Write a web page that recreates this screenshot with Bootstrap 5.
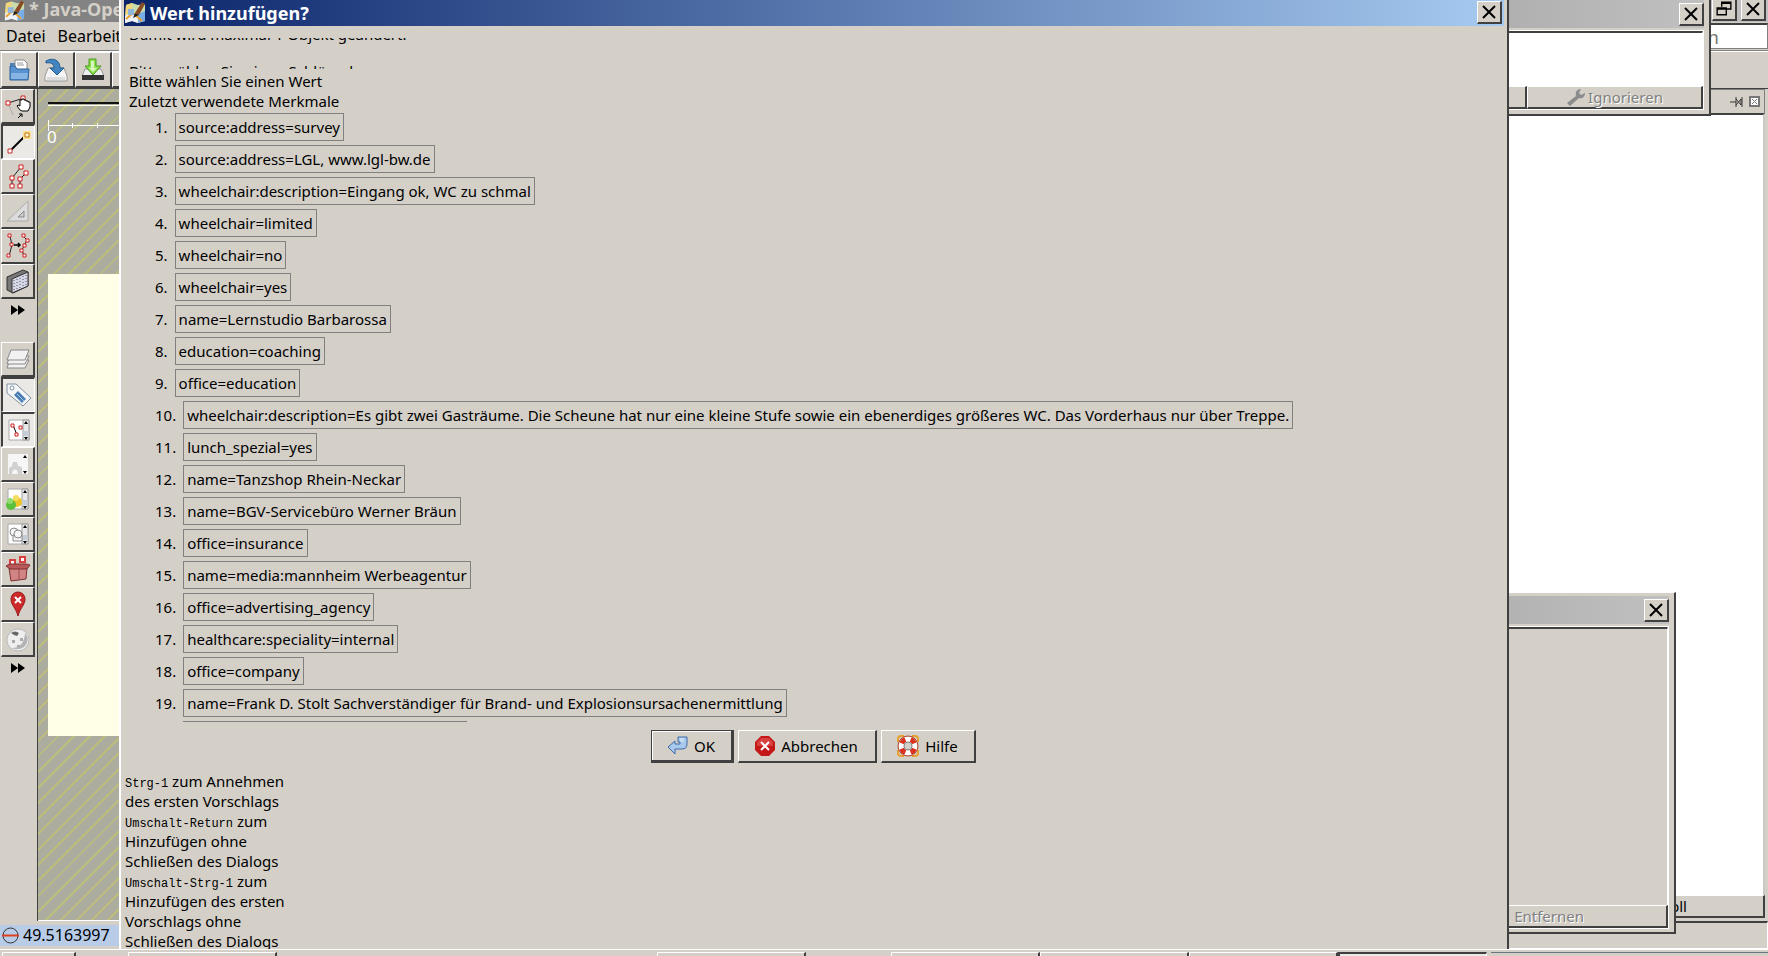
<!DOCTYPE html>
<html lang="de">
<head>
<meta charset="utf-8">
<meta name="viewport" content="width=device-width, initial-scale=1">
<title>Wert hinzufügen?</title>
<link href="https://cdn.jsdelivr.net/npm/bootstrap@5.3.0/dist/css/bootstrap.min.css" rel="stylesheet">
<style>
:root { --face:#d4d0c8; --dark:#404040; --shade:#808080; }
body { font-family:"Noto Sans","Liberation Sans",sans-serif; font-size:15px; line-height:20px; color:#000; background:var(--face); }
.face { background:var(--face); }
.raised { background:var(--face); border:solid; border-width:1px 2px 2px 1px; border-color:#fff var(--dark) var(--dark) #fff; border-radius:0; color:#000; padding:0; }
.pressed { background:#ebe9e5; border-width:2px 1px 1px 2px; border-color:var(--dark) #fff #fff var(--dark); }
.caption-bar { font-family:"Noto Sans","DejaVu Sans",sans-serif; font-weight:700; font-size:18px; white-space:nowrap; }
.cap-btn { width:25px; height:23px; display:flex; align-items:center; justify-content:center; flex:none; }

/* main window */
.app-caption { height:22px; background:linear-gradient(90deg,#808080,#c0c0c0); color:#d4d0c8; padding-bottom:4px; padding-right:2px; }
.app-menu { height:29px; border-bottom:1px solid var(--shade); padding-left:6px; gap:12px; }
.app-menu a { color:#000; text-decoration:none; font-size:16px; }
.search-box { width:260px; height:26px; border:1px solid var(--shade); border-top:2px solid var(--dark); border-radius:0; padding:0 48px 0 2px; font-size:18px; color:#808080; text-align:right; }
.app-tools { height:38px; border-top:1px solid #fff; border-bottom:1px solid var(--dark); padding-left:1px; }
.app-tools .raised { width:37px; height:36px; }
.side-tools { width:38px; padding:0 1px; border-right:1px solid var(--dark); }
.side-tools .raised { width:34px; height:35px; }
.more-btn { width:34px; height:22px; border:0; background:none; padding:0; }
.side-gap { height:21px; }
.map-view { background:repeating-linear-gradient(135deg,#adad9f 0 9px,#bcbc7c 9px 11px); border-bottom:1px solid #fff; }
.map-rule { margin:13px 0 0 10px; border-top:2px solid #111; border-bottom:1px solid #fff; height:4px; }
.map-scale { margin:14px 0 0 10px; height:11px; background:
  linear-gradient(#fff,#fff) 0 5px/100% 1px no-repeat,
  linear-gradient(#fff,#fff) 0 0/1px 11px no-repeat,
  repeating-linear-gradient(90deg,transparent 0 24px,#fff 24px 25px) 0 3px/100% 5px no-repeat; }
.map-zero { margin-left:9px; color:#fff; font-size:17px; line-height:12px; }
.map-area { margin:131px 0 184px 10px; background:#ffffe8; }
.dock { width:330px; padding:0 3px 3px 0; }
.dock-head { height:24px; border-top:1px solid var(--shade); border-right:1px solid var(--shade); }
.dock-list { border-top:2px solid var(--dark); border-right:2px solid #c8c8c4; background:#fff; }
.dock-btn { padding-right:76px; }
.app-status { height:28px; }
.coord { width:160px; height:21px; background:#b8cce8; font-size:16px; padding-left:2px; }
.status-rest { border:1px solid #fff; border-top:2px solid var(--dark); }
.taskbar { height:7px; border-top:1px solid #fff; padding-top:2px; }
.task { flex:none; width:149px; height:12px; }

/* windows above it */
.win { position:absolute; background:var(--face); }
.win-alert { top:0; right:57px; width:300px; height:116px; border-right:2px solid var(--dark); border-bottom:2px solid var(--dark); padding:0 5px 4px 0; }
.win-props { bottom:22px; right:92px; width:300px; height:342px; border:solid; border-width:1px 2px 2px 0; border-color:#fff var(--dark) var(--dark); padding:3px 5px 3px 0; }
.grey-caption { height:28px; background:linear-gradient(90deg,#a8a8a8,#c0c0c0); }
.inner { margin-top:2px; border:1px solid #fff; }
.inner-field { border-top:2px solid var(--dark); border-right:1px solid #fff; }
.ghost { color:#808080; text-shadow:1px 1px 0 #fff; }
.remove-btn { padding-right:82px; height:23px; }
.ignore-btn { width:176px; gap:2px; }
.dialog-win { top:0; bottom:7px; left:119px; right:259px; border-left:2px solid #fff; border-right:2px solid var(--dark); padding:0 3px; overflow:hidden; }
.blue-caption { height:27px; background:linear-gradient(90deg,#0a246a,#a6caf0); color:#fff; padding-right:2px; }
.intro { height:33px; margin-top:12px; padding-left:5px; overflow:hidden; display:flex; flex-direction:column; justify-content:flex-end; }
.intro p { flex:none; }
.intro-gap { height:17px; }
.intro-end { margin-bottom:-12px; }
.choices { padding:2px 0 0 5px; min-height:0; overflow:hidden; }
.tags { padding-left:26px; padding-top:2px; }
.tags li { display:flex; align-items:center; gap:7px; height:28px; margin-bottom:4px; }
.tag-box { border:1px solid var(--shade); padding:3px; height:28px; white-space:nowrap; }
.dlg-btn { height:33px; display:flex; align-items:center; justify-content:center; gap:6px; }
.dlg-btn.is-default { border:1px solid var(--dark); border-width:1px 3px 3px 1px; box-shadow:inset 1px 1px 0 #fff; }
.dlg-row { padding-right:2px; }
.w-ok { width:83px; } .w-cancel { width:139px; } .w-help { width:95px; }
.hints { flex:none; width:164px; height:178px; padding-left:1px; margin-top:8px; overflow:hidden; }
.hints kbd { font:12px/12px "Liberation Mono",monospace; color:#000; background:none; padding:0; }
svg { flex:none; display:block; margin:auto; }
.caption-bar svg, .dlg-btn svg, .coord svg, .ghost svg { margin-left:0; margin-right:0; }
</style>
</head>
<body class="overflow-hidden">
<svg width="0" height="0" class="position-absolute" aria-hidden="true">
  <symbol id="i-x" viewBox="0 0 14 14"><path d="M1 1 13 13M13 1 1 13" stroke="#000" stroke-width="2"/></symbol>
  <symbol id="i-app" viewBox="0 0 22 22"><path d="M2 3 8 1l6 2 7-1v17l-7 2-6-2-7 2z" fill="#c9dcae"/><path d="M2 3 8 1v9l-7 4z" fill="#f0d67a"/><path d="M14 12l7-3v10l-7 2z" fill="#78aee8"/><path d="M1 14l7-4 6 5v6l-6-2-7 2z" fill="#eef2f6"/><path d="M2 17 9 11l9 8" stroke="#e8a030" stroke-width="2" fill="none"/><path d="M4 7h6v6H4z" fill="#8fb5dd"/><path d="M18 0 21 2 15 13l-4-2z" fill="#8a4a24"/><path d="M15 13l-6 3 2-5z" fill="#222"/></symbol>
  <symbol id="i-more" viewBox="0 0 16 10"><path d="M1 0 8 5 1 10zM8 0l7 5-7 5z" fill="#000"/></symbol>
  <symbol id="i-page" viewBox="0 0 24 24"><path d="M2 2h20v20H2z" fill="#fff" stroke="#aaa" stroke-width="1"/><path d="M16 2h6v20h-6z" fill="#e8e8e8" stroke="#999" stroke-width="1"/><path d="M16 13h6v5h-6z" fill="#c4ccd6"/><path d="M17 6l2-3 2 3zM17 19l2 3 2-3z" fill="#000"/></symbol>
</svg>

<div class="vh-100 d-flex flex-column position-relative face">
  <div class="flex-grow-1 d-flex flex-column" style="min-height:0">
    <header class="app-caption caption-bar d-flex align-items-center ps-1 gap-1">
      <svg width="21" height="22"><use href="#i-app"/></svg>
      <span class="me-auto">* Java-OpenStreetMap-Editor</span>
      <button class="raised cap-btn" aria-label="Wiederherstellen"><svg width="16" height="16" viewBox="0 0 14 14"><path d="M5 5V1h8v6H9M5 2h8M1 6h8v6H1zM1 7h8" fill="none" stroke="#000" stroke-width="1.2"/></svg></button>
      <button class="raised cap-btn" aria-label="Schließen"><svg width="14" height="14"><use href="#i-x"/></svg></button>
    </header>
    <nav class="app-menu d-flex align-items-center">
      <a href="#">Datei</a><a href="#">Bearbeiten</a>
      <input class="search-box ms-auto" aria-label="Suchen" placeholder="Menüeintrag suchen" value="">
    </nav>
    <div class="app-tools d-flex">
      <button class="raised" aria-label="Öffnen"><svg width="24" height="24" viewBox="0 0 24 24"><path d="M3 8V5h6l1 2" fill="#4d82bd"/><path d="M8 2h9l3 3v9H8z" fill="#fff" stroke="#888"/><path d="M10 5h6M10 7h7" stroke="#999"/><path d="M3 8h5l2 3h12l-1 11H3z" fill="#5a94d0" stroke="#2d619c"/><path d="M4 15h17l-1 6H4z" fill="#86b4e4"/></svg></button>
      <button class="raised" aria-label="Speichern"><svg width="24" height="24" viewBox="0 0 24 24"><path d="M4 10h16l3 8v5H1v-5z" fill="#f4f4f4" stroke="#999"/><path d="M3 19h18v3H3z" fill="#ddd"/><path d="M2 3c7-4 14-1 14 7h4l-7 7-7-7h4c0-4-3-6-8-5z" fill="#4385c0" stroke="#215d94"/></svg></button>
      <button class="raised" aria-label="Herunterladen"><svg width="24" height="24" viewBox="0 0 24 24"><path d="M4 11h16l3 7H1z" fill="#eee" stroke="#999"/><path d="M1 17h22v5H1z" fill="#333"/><path d="M8 1h7v7h5l-8 9-8-9h4z" fill="#8be04e" stroke="#4a9a1e"/><path d="M10 3h3v7h3l-4 4-4-4h2z" fill="#d8f8c0"/></svg></button>
      <button class="raised" aria-label="Hochladen"></button>
    </div>
    <div class="flex-grow-1 d-flex" style="min-height:0">
      <aside class="side-tools d-flex flex-column">
        <button class="raised" aria-label="Auswählen"><svg width="26" height="26" viewBox="0 0 26 26"><path d="M3 10 19 5" stroke="#222" fill="none"/><path d="M4 12 8 22" stroke="#aaa" fill="none"/><path d="M1 8h4v4H1zM16 3h4v4h-4z" fill="#fff" stroke="#d02020"/><path d="M15 17l-3-4 1-1 2 1V7h2V6h2v1h2v1h2v1h2v5l-2 4h-6z" fill="#fff" stroke="#000"/><path d="M13 25l4-4m0 3v-3h-3" stroke="#000" fill="none"/></svg></button>
        <button class="raised pressed" aria-label="Zeichnen"><svg width="26" height="26" viewBox="0 0 26 26"><path d="M4 22 21 5" stroke="#000" stroke-width="2"/><path d="M17 2h8v8h-8z" fill="#fbe08a"/><path d="M19 4h4v4h-4z" fill="#fff8c8" stroke="#c07020"/><path d="M2 20h4v4H2z" fill="#fff" stroke="#c03030"/></svg></button>
        <button class="raised" aria-label="Parallele Linien"><svg width="26" height="26" viewBox="0 0 26 26"><path d="M7 23v-8L16 4M15 23v-7l6-6" stroke="#222" fill="none"/><path d="M5 21h4v4H5zM5 13h4v4H5zM14 2h4v4h-4zM13 21h4v4h-4zM13 14h4v4h-4zM19 8h4v4h-4z" fill="#fff" stroke="#d02020"/></svg></button>
        <button class="raised" aria-label="Winkel"><svg width="26" height="26" viewBox="0 0 26 26"><path d="M2 23 23 3v20z" fill="#dcdcdc" stroke="#aaa"/><path d="M13 19l6-6v6z" fill="#ccc" stroke="#888"/></svg></button>
        <button class="raised" aria-label="Verbessern"><svg width="26" height="26" viewBox="0 0 26 26"><path d="M5 3 7 12 4 23M18 3l4 4-3 6-2 4 2 6" stroke="#222" fill="none"/><path d="M9 12h6m-2-2 2 2-2 2" stroke="#000" fill="none" stroke-width="1.5"/><path d="M3 1h3v3H3zM5 10h3v3H5zM2 21h3v3H2zM17 1h3v3h-3zM21 6h3v3h-3zM18 11h3v3h-3zM15 16h3v3h-3zM18 21h3v3h-3z" fill="#fff" stroke="#d02020"/></svg></button>
        <button class="raised" aria-label="Extrudieren"><svg width="26" height="26" viewBox="0 0 26 26"><path d="M2 9 18 2l5 2v14L8 25l-6-3z" fill="#777" stroke="#333"/><path d="M7 11 23 4v14L7 25z" fill="#d6d8ea" stroke="#333"/><path d="M9 12v11M12 11v11M15 10v10M18 8v11M21 7v10" stroke="#555" stroke-dasharray="1 2"/></svg></button>
        <button class="more-btn" aria-label="Mehr"><svg width="16" height="10"><use href="#i-more"/></svg></button>
        <div class="side-gap"></div>
        <button class="raised" aria-label="Ebenen"><svg width="26" height="26" viewBox="0 0 26 26"><g fill="#f2f2f2" stroke="#888"><path d="M2 22 5 14h19l-4 8z"/><path d="M2 18 5 10h19l-4 8z"/><path d="M2 14 6 4h18l-4 10z"/></g></svg></button>
        <button class="raised pressed" aria-label="Merkmale"><svg width="26" height="26" viewBox="0 0 26 26"><path d="M1 2h9l15 14-8 8L1 11z" fill="#f4f6f8" stroke="#8090a0"/><circle cx="6" cy="6" r="2" fill="#fff" stroke="#8090a0"/><path d="M8 13l4-4 8 8-4 4z" fill="#4a7fb4"/><path d="M11 12l7 7" stroke="#a8c8e8"/></svg></button>
        <button class="raised pressed" aria-label="Auswahl"><svg width="24" height="24" viewBox="0 0 24 24"><use href="#i-page"/><path d="M6 7 10 17" stroke="#000"/><path d="M4 6h3v3H4zM12 8h3v3h-3zM8 15h3v3H8z" fill="#fff" stroke="#d02020"/></svg></button>
        <button class="raised" aria-label="Relationen"><svg width="24" height="24" viewBox="0 0 24 24"><path d="M2 2h20v20H2z" fill="#f6f6f6"/><path d="M3 22v-6l3-2 1-4h4l1 4 4 1v7h-4c0-6-6-6-6 0z" fill="#d0d0d0"/><path d="M17 6l2-3 2 3zM17 19l2 3 2-3z"/></svg></button>
        <button class="raised" aria-label="Autoren"><svg width="24" height="24" viewBox="0 0 24 24"><use href="#i-page"/><circle cx="11" cy="15" r="5" fill="#ecc428"/><circle cx="10" cy="11" r="3" fill="#f4dc60"/><circle cx="5" cy="18" r="5" fill="#5abf3a"/><circle cx="4" cy="14" r="3" fill="#8fdc70"/></svg></button>
        <button class="raised" aria-label="Filter"><svg width="24" height="24" viewBox="0 0 24 24"><use href="#i-page"/><g fill="#f6f6f6" stroke="#888"><circle cx="8" cy="10" r="4"/><path d="M7 13h9v6H7z"/><circle cx="12" cy="12" r="4"/></g></svg></button>
        <button class="raised" aria-label="Änderungssätze"><svg width="26" height="26" viewBox="0 0 26 26"><path d="M4 12l18-1-1 12-15 2z" fill="#d08484" stroke="#803030"/><path d="M14 13v11" stroke="#a05050"/><path d="M5 4h5v5H5zM15 1h5v5h-5z" fill="#fff" stroke="#d84040" stroke-width="2"/><path d="M1 10l4-2h16l4 1-3 4H5z" fill="#b85858" stroke="#803030"/></svg></button>
        <button class="raised" aria-label="Fehler"><svg width="26" height="26" viewBox="0 0 26 26"><path d="M13 25C11 17 6 14 6 8a7 7 0 0 1 14 0c0 6-5 9-7 17z" fill="#cc2a2a" stroke="#991818"/><path d="M10 6l6 6m0-6-6 6" stroke="#fff" stroke-width="2"/></svg></button>
        <button class="raised" aria-label="Wikipedia"><svg width="26" height="26" viewBox="0 0 26 26"><circle cx="13" cy="14" r="11" fill="#eee" stroke="#bbb"/><path d="M20 7q6 7-1 14-6 4-12 1 12 0 13-15z" fill="#b4b4b4"/><path d="M6 7q4-3 8 0l-2 3-3-1z" fill="#666"/><path d="M7 14h3v3H7zM15 12h3v3h-3zM12 19h3v2h-3z" fill="#aaa"/></svg></button>
        <button class="more-btn" aria-label="Mehr"><svg width="16" height="10"><use href="#i-more"/></svg></button>
      </aside>
      <main class="map-view flex-grow-1 d-flex flex-column">
        <div class="map-rule"></div><div class="map-scale"></div><div class="map-zero">0</div>
        <div class="map-area flex-grow-1"></div>
      </main>
      <section class="dock face d-flex flex-column">
        <div class="dock-head d-flex align-items-center justify-content-end gap-1 pe-1">
          <svg class="mx-0" width="15" height="12" viewBox="0 0 15 12"><path d="M0 6h6M6 1v10M6 3l5 6V3L6 9M12 1v10" stroke="#333" fill="none" stroke-width="1"/></svg>
          <svg class="mx-0" width="11" height="11" viewBox="0 0 11 11"><path d="M1 1h9v9H1z" fill="#fff" stroke="#777" stroke-width="2"/><path d="M3 3l5 5m0-5L3 8" stroke="#777" stroke-width="1"/></svg>
        </div>
        <div class="dock-list flex-grow-1"></div>
        <button class="raised dock-btn text-end">Protokoll</button>
      </section>
    </div>
    <footer class="app-status d-flex align-items-center">
      <div class="coord d-flex align-items-center gap-1"><svg width="17" height="17" viewBox="0 0 17 17"><circle cx="8.500" cy="8.500" r="7.500" fill="none" stroke="#333"/><path d="M0 8.500h17" stroke="#e04020" stroke-width="2"/></svg><span>49.5163997</span></div>
      <div class="status-rest flex-grow-1 align-self-stretch"></div>
    </footer>
  </div>
  <div class="taskbar d-flex overflow-hidden">
    <div class="raised task" style="width:74px;margin-left:2px"></div>
    <div class="raised task" style="margin-left:52px"></div>
    <div class="raised task" style="margin-left:380px"></div>
    <div class="raised task" style="margin-left:85px"></div>
    <div class="raised task"></div>
    <div class="raised task"></div>
    <div class="raised pressed task"></div>
    <div class="task flex-grow-1 border-top border-secondary ms-1"></div>
  </div>

  <section class="win win-alert d-flex flex-column">
    <div class="grey-caption d-flex align-items-center justify-content-end"><button class="raised cap-btn" aria-label="Schließen"><svg width="14" height="14"><use href="#i-x"/></svg></button></div>
    <div class="inner flex-grow-1 d-flex flex-column">
      <div class="inner-field bg-white flex-grow-1"></div>
      <div class="d-flex">
        <button class="raised ghost flex-grow-1" disabled></button>
        <button class="raised ghost ignore-btn d-flex align-items-center justify-content-center" disabled><svg width="20" height="18" viewBox="0 0 20 18"><path d="M1 15 10 8c-1-4 1-7 5-7l-2 4 2 2 4-2c0 4-3 6-6 5L4 18z" fill="#8c8c8c"/></svg>Ignorieren</button>
      </div>
    </div>
  </section>

  <section class="win win-props d-flex flex-column">
    <div class="grey-caption d-flex align-items-center justify-content-end"><button class="raised cap-btn" aria-label="Schließen"><svg width="14" height="14"><use href="#i-x"/></svg></button></div>
    <div class="inner flex-grow-1 d-flex flex-column">
      <div class="inner-field flex-grow-1"></div>
      <button class="raised ghost remove-btn text-end" disabled>Entfernen</button>
    </div>
  </section>

  <section class="win dialog-win d-flex flex-column" role="dialog" aria-labelledby="dlg">
    <div class="blue-caption caption-bar d-flex align-items-center gap-1">
      <svg width="22" height="22"><use href="#i-app"/></svg><span id="dlg" class="me-auto">Wert hinzufügen?</span>
      <button class="raised cap-btn" aria-label="Schließen"><svg width="14" height="14"><use href="#i-x"/></svg></button>
    </div>
    <div class="intro">
      <p class="mb-0">Damit wird maximal 1 Objekt geändert.</p>
      <p class="intro-gap mb-0"></p>
      <p class="intro-end">Bitte wählen Sie einen Schlüssel</p>
    </div>
    <div class="choices flex-grow-1">
      <div>Bitte wählen Sie einen Wert</div>
      <div>Zuletzt verwendete Merkmale</div>
      <ol class="tags list-unstyled mb-0">
        <li>1. <span class="tag-box">source:address=survey</span></li>
        <li>2. <span class="tag-box">source:address=LGL, www.lgl-bw.de</span></li>
        <li>3. <span class="tag-box">wheelchair:description=Eingang ok, WC zu schmal</span></li>
        <li>4. <span class="tag-box">wheelchair=limited</span></li>
        <li>5. <span class="tag-box">wheelchair=no</span></li>
        <li>6. <span class="tag-box">wheelchair=yes</span></li>
        <li>7. <span class="tag-box">name=Lernstudio Barbarossa</span></li>
        <li>8. <span class="tag-box">education=coaching</span></li>
        <li>9. <span class="tag-box">office=education</span></li>
        <li>10. <span class="tag-box">wheelchair:description=Es gibt zwei Gasträume. Die Scheune hat nur eine kleine Stufe sowie ein ebenerdiges größeres WC. Das Vorderhaus nur über Treppe.</span></li>
        <li>11. <span class="tag-box">lunch_spezial=yes</span></li>
        <li>12. <span class="tag-box">name=Tanzshop Rhein-Neckar</span></li>
        <li>13. <span class="tag-box">name=BGV-Servicebüro Werner Bräun</span></li>
        <li>14. <span class="tag-box">office=insurance</span></li>
        <li>15. <span class="tag-box">name=media:mannheim Werbeagentur</span></li>
        <li>16. <span class="tag-box">office=advertising_agency</span></li>
        <li>17. <span class="tag-box">healthcare:speciality=internal</span></li>
        <li>18. <span class="tag-box">office=company</span></li>
        <li>19. <span class="tag-box">name=Frank D. Stolt Sachverständiger für Brand- und Explosionsursachenermittlung</span></li>
        <li>20. <span class="tag-box">name=Sachverständiger Mannheim AG</span></li>
      </ol>
    </div>
    <div class="dlg-row d-flex justify-content-center gap-1 mt-2">
      <button class="raised dlg-btn is-default w-ok"><svg width="21" height="20" viewBox="0 0 21 20"><path d="M1 11 8 5v3h5V6h-2V1h9v7q0 5-5 5H8v5z" fill="#a8c8ec" stroke="#3c6ca8"/><path d="M14 2v4m2-4v4" stroke="#e4f0fc" fill="none"/></svg>OK</button>
      <button class="raised dlg-btn w-cancel"><svg width="20" height="20" viewBox="0 0 20 20"><path d="M6 0h8l6 6v8l-6 6H6l-6-6V6z" fill="#c41818"/><path d="M6 2h8l4 4v4H2V6z" fill="#d84040"/><path d="M6 6l8 8m0-8-8 8" stroke="#fff" stroke-width="2"/></svg>Abbrechen</button>
      <button class="raised dlg-btn w-help"><svg width="22" height="22" viewBox="0 0 22 22"><path d="M1 7V4q0-3 3-3h3M15 1h3q3 0 3 3v3M21 15v3q0 3-3 3h-3M7 21H4q-3 0-3-3v-3" fill="none" stroke="#e8a030" stroke-width="2"/><circle cx="11" cy="11" r="7" fill="none" stroke="#fff" stroke-width="5"/><circle cx="11" cy="11" r="7" fill="none" stroke="#dc3020" stroke-width="5" pathLength="80" stroke-dasharray="10 10" stroke-dashoffset="-5"/><circle cx="11" cy="11" r="4" fill="none" stroke="#888"/><circle cx="11" cy="11" r="10" fill="none" stroke="#b04030"/></svg>Hilfe</button>
    </div>
    <div class="hints"><kbd>Strg-1</kbd> zum Annehmen des ersten Vorschlags<br><kbd>Umschalt-Return</kbd> zum Hinzufügen ohne Schließen des Dialogs<br><kbd>Umschalt-Strg-1</kbd> zum Hinzufügen des ersten Vorschlags ohne Schließen des Dialogs</div>
  </section>
</div>
<script src="https://cdn.jsdelivr.net/npm/bootstrap@5.3.0/dist/js/bootstrap.bundle.min.js"></script>
</body>
</html>
